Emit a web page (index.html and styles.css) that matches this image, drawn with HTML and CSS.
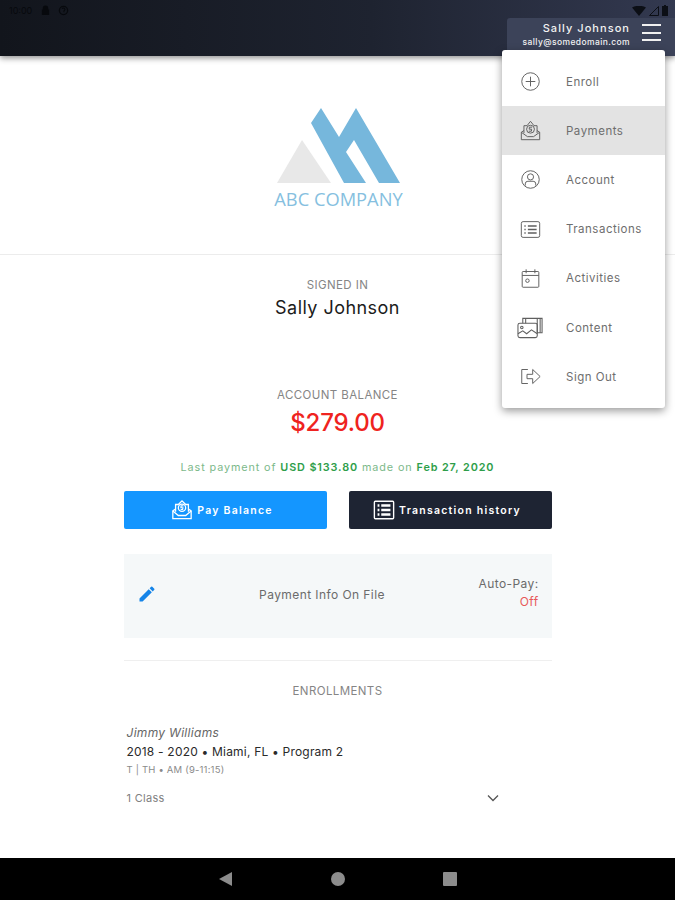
FILE: index.html
```html
<!DOCTYPE html>
<html lang="en">
<head>
<meta charset="utf-8">
<title>Payments</title>
<link rel="stylesheet" href="styles.css">
</head>
<body>
<div class="screen">
  <header class="topbar">
    <div class="status">
      <div class="status-left">
        <span class="clock">10:00</span>
        <svg class="st-icon" viewBox="0 0 12 12"><path d="M3 5V3.500a3 3 0 0 1 6 0V5h1v6H2V5z" fill="#07090d"/></svg>
        <svg class="st-icon" viewBox="0 0 12 12"><circle cx="6" cy="6" r="4.500" fill="none" stroke="#07090d" stroke-width="1.400"/><path d="M4.500 4.200a1.600 1.600 0 1 1 2 2.200V8" fill="none" stroke="#07090d" stroke-width="1.200"/></svg>
      </div>
      <div class="status-right">
        <svg class="st-wifi" viewBox="0 0 14 10"><path d="M0 1.500Q7-2 14 1.500L7 10z" fill="#0c0f16"/></svg>
        <svg class="st-sig" viewBox="0 0 10 10"><path d="M9.500 .5v9h-9z" fill="none" stroke="#0c0f16"/></svg>
        <svg class="st-bat" viewBox="0 0 6 11"><path d="M2 0h2v1h2v10H0V1h2z" fill="#0c0f16"/></svg>
      </div>
    </div>
    <div class="account-chip">
      <div class="account-text">
        <div class="account-name">Sally Johnson</div>
        <div class="account-mail">sally@somedomain.com</div>
      </div>
      <div class="burger"><i></i><i></i><i></i></div>
    </div>
  </header>

  <main class="content">
    <section class="brand">
      <svg class="logo" viewBox="0 0 130 76">
        <path d="M4 75 29 32 58 75z" fill="#e8e8e8"/>
        <path d="M38 15 48 0 66 29 83 0 127 75H106L81 32 73 44 93 75H71z" fill="#76b7dc"/>
      </svg>
      <div class="logo-name">ABC COMPANY</div>
    </section>

    <section class="column">
      <div class="label signed">SIGNED IN</div>
      <div class="user">Sally Johnson</div>
      <div class="label balance-label">ACCOUNT BALANCE</div>
      <div class="balance">$279.00</div>
      <div class="last-pay">Last payment of <b>USD $133.80</b> made on <b>Feb 27, 2020</b></div>

      <div class="actions">
        <button class="btn btn-pay">
          <svg class="btn-icon" viewBox="0 0 24 24" fill="none" stroke="#fff" stroke-width="1.400"><path d="M5 11 2 13v8.500h20V13l-3-2"/><path d="M2 13l6 5h8l6-5"/><path d="M5 14V6h3l4-4 4 4h3v8"/><circle cx="12" cy="9.500" r="4"/><path d="M13.500 7.500h-2.500l-.2 2h2.200l-.3 2h-2.200" stroke-width="1.200"/></svg>
          <span>Pay Balance</span>
        </button>
        <button class="btn btn-history">
          <svg class="btn-icon" viewBox="0 0 24 24" fill="none" stroke="#fff" stroke-width="1.500"><rect x="1.500" y="2.500" width="21" height="19" rx="1"/><path d="M5 7h2M5 12h2M5 17h2M9 7h10M9 12h10M9 17h10" stroke-width="2.800"/></svg>
          <span>Transaction history</span>
        </button>
      </div>

      <div class="pay-info">
        <svg class="pencil" viewBox="0 0 24 24"><path d="M3 17.250V21h3.750L17.810 9.940l-3.750-3.750L3 17.250zM20.710 7.040a1 1 0 0 0 0-1.410l-2.340-2.340a1 1 0 0 0-1.410 0l-1.830 1.830 3.750 3.750 1.830-1.830z" fill="#1584e8"/></svg>
        <div class="pay-info-text">Payment Info On File</div>
        <div class="autopay">Auto-Pay:<br><span class="off">Off</span></div>
      </div>

      <div class="rule"></div>
      <div class="label enroll-label">ENROLLMENTS</div>

      <div class="enrollment">
        <div class="student">Jimmy Williams</div>
        <div class="program">2018 - 2020 • Miami, FL • Program 2</div>
        <div class="schedule">T | TH • AM (9-11:15)</div>
        <div class="classes">
          <span>1 Class</span>
          <svg class="chevron" viewBox="0 0 12 8"><path d="M1 1.500 6 6.500l5-5" fill="none" stroke="#555" stroke-width="1.300"/></svg>
        </div>
      </div>
    </section>
  </main>

  <nav class="navbar">
    <svg class="nav-icon" viewBox="0 0 14 14"><path d="M13 0v14L0 7z" fill="#8c8c8c"/></svg>
    <svg class="nav-icon" viewBox="0 0 14 14"><circle cx="7" cy="7" r="7" fill="#8c8c8c"/></svg>
    <svg class="nav-icon" viewBox="0 0 14 14"><rect width="14" height="14" rx="1" fill="#8c8c8c"/></svg>
  </nav>

  <div class="menu">
    <div class="menu-item">
      <svg class="menu-icon" viewBox="0 0 24 24"><circle cx="12" cy="12" r="10"/><path d="M12 6.500v11M6.500 12h11"/></svg>
      <span>Enroll</span>
    </div>
    <div class="menu-item active">
      <svg class="menu-icon" viewBox="0 0 24 24"><path d="M4.500 12 1.500 14v8.500h21V14l-3-2"/><path d="M1.500 14l7 5h7l7-5"/><path d="M4.500 15V6.500h3.500L12 1.500l4 5h3.500V15"/><circle cx="12" cy="10.500" r="4.500"/><path d="M13.800 8.200h-3l-.3 2.300h2.800l-.3 2.300h-3"/></svg>
      <span>Payments</span>
    </div>
    <div class="menu-item">
      <svg class="menu-icon" viewBox="0 0 24 24"><circle cx="12" cy="12" r="10"/><circle cx="12" cy="9" r="3.500"/><path d="M6 19v-2a3 3 0 0 1 3-3h6a3 3 0 0 1 3 3v2"/></svg>
      <span>Account</span>
    </div>
    <div class="menu-item">
      <svg class="menu-icon" viewBox="0 0 24 24"><rect x="1.500" y="3" width="21" height="18" rx="2"/><path d="M5 8h1.500M5 12h1.500M5 16h1.500M9 8h10M9 12h10M9 16h10" stroke-width="1.600"/></svg>
      <span>Transactions</span>
    </div>
    <div class="menu-item">
      <svg class="menu-icon" viewBox="0 0 24 24"><rect x="2.500" y="4" width="19" height="18" rx="1"/><path d="M2.500 8.500h19M7 1.500V6M17 1.500V6"/><circle cx="8.500" cy="14.500" r="2"/></svg>
      <span>Activities</span>
    </div>
    <div class="menu-item">
      <svg class="menu-icon wide" viewBox="0 0 28 24"><path d="M6 7V2h20v15h-5"/><path d="M21 2v15M24 2v15"/><path d="M9 2v5"/><rect x="1" y="7" width="20" height="15" rx="2"/><circle cx="5" cy="11.500" r="1.300"/><path d="M1 18l5-3 4 3 5-4 6 4"/></svg>
      <span>Content</span>
    </div>
    <div class="menu-item">
      <svg class="menu-icon" viewBox="0 0 24 24"><path d="M9 4H2v16h7"/><path d="M8 9.500h6.500V4L23 12l-8.500 8v-5.500H8z"/></svg>
      <span>Sign Out</span>
    </div>
  </div>
</div>
</body>
</html>
```
FILE: styles.css
```css
* { box-sizing: border-box; }
html, body { margin: 0; padding: 0; }
body { font-family: "Inter", "Open Sans", sans-serif; background: #fff; color: #222; }

.screen { position: relative; width: 675px; height: 900px; display: flex; flex-direction: column; overflow: hidden; }

/* top bar */
.topbar {
  height: 56px; flex: none; display: flex; flex-direction: column; align-items: flex-end;
  background: linear-gradient(90deg, #12151c 0%, #1e2330 55%, #333950 100%);
  box-shadow: 0 2px 6px rgba(0,0,0,.45);
  position: relative;
}
.status { width: 100%; height: 18px; display: flex; justify-content: space-between; align-items: flex-start; padding: 5px 7px 0 9px; }
.status-left { display: flex; align-items: center; gap: 7px; }
.clock { font-size: 9px; color: #07090d; width: 24px; }
.st-icon { width: 11px; height: 11px; }
.status-right { display: flex; align-items: center; gap: 3px; }
.st-wifi { width: 14px; height: 10px; }
.st-sig { width: 10px; height: 10px; }
.st-bat { width: 6px; height: 11px; }

.account-chip {
  width: 168px; height: 38px; display: flex; justify-content: flex-end; padding: 3px 14px 0 0; gap: 12px;
  background: #3c4359; border-radius: 3px 0 0 0;
}
.account-text { text-align: right; color: #f2f2f2; }
.account-name { font-size: 11px; font-weight: 500; letter-spacing: 1.050px; line-height: 14px; }
.account-mail { font-size: 8.500px; font-weight: 500; letter-spacing: .4px; line-height: 13px; margin-top: 1px; }
.burger { width: 19px; height: 17px; display: flex; flex-direction: column; justify-content: space-between; margin-top: 3px; }
.burger i { display: block; height: 2px; background: #f0f0f0; }

/* main */
.content { flex: 1; display: flex; flex-direction: column; align-items: center; }
.brand { width: 100%; height: 199px; flex: none; border-bottom: 1px solid #ececec; display: flex; flex-direction: column; align-items: center; padding-top: 52px; }
.logo { width: 130px; height: 76px; display: block; }
.logo-name { font-family: "Open Sans", sans-serif; font-size: 18.300px; line-height: 24px; color: #86bfe0; margin: 3px 0 0 2px; }

.column { width: 428px; display: flex; flex-direction: column; align-items: center; }
.label { font-size: 11.500px; letter-spacing: .4px; color: #858585; line-height: 14px; }
.signed { margin-top: 23px; }
.user { font-size: 18px; letter-spacing: .45px; line-height: 24px; color: #1b1b1b; margin-top: 4px; }
.balance-label { margin-top: 68px; }
.balance { font-size: 24px; font-weight: 500; letter-spacing: -.2px; color: #ef2320; line-height: 30px; margin-top: 6px; }
.last-pay { font-size: 10.800px; letter-spacing: .9px; color: #7cb98a; line-height: 14px; margin-top: 23px; }
.last-pay b { color: #2e9e4a; font-weight: 600; }

.actions { width: 100%; display: flex; justify-content: space-between; margin-top: 16px; }
.btn { width: 203px; height: 38px; border: 0; border-radius: 2px; display: flex; align-items: center; justify-content: center; gap: 4px; color: #fff; font-family: inherit; font-size: 10.500px; font-weight: 600; letter-spacing: 1.250px; padding: 0 6px 0 0; }
.btn-pay { background: #1496ff; }
.btn-history { background: #1e2433; }
.btn-icon { width: 22px; height: 22px; }

.pay-info { width: 100%; height: 84px; margin-top: 25px; background: #f5f8f9; display: flex; align-items: center; padding: 0 13px 4px; font-size: 12px; letter-spacing: .42px; color: #6b6b6b; }
.pencil { width: 20px; height: 20px; flex: none; }
.pay-info-text { flex: 1; text-align: center; padding-left: 9px; }
.autopay { text-align: right; line-height: 18px; width: 60px; padding-bottom: 2px; white-space: nowrap; }
.off { color: #e8585a; }

.rule { width: 100%; height: 1px; background: #efefef; margin-top: 22px; }
.enroll-label { margin-top: 23px; }

.enrollment { width: 100%; margin-top: 28px; padding-left: 3px; }
.student { font-size: 12px; font-style: italic; color: #666; line-height: 14px; letter-spacing: .3px; }
.program { font-size: 12px; color: #2a2a2a; line-height: 16px; margin-top: 4px; letter-spacing: .2px; }
.schedule { font-size: 9.500px; color: #8a8a8a; line-height: 12px; margin-top: 4px; letter-spacing: .2px; }
.classes { display: flex; justify-content: space-between; align-items: center; width: 372px; font-size: 11px; color: #808080; margin-top: 15px; line-height: 14px; letter-spacing: .3px; }
.chevron { width: 12px; height: 8px; }

/* android nav */
.navbar { height: 42px; flex: none; background: #000; display: flex; justify-content: center; align-items: center; gap: 98px; padding-left: 1px; }
.nav-icon { width: 14px; height: 14px; }

/* dropdown */
.menu { position: absolute; left: 502px; top: 50px; width: 163px; height: 358px; padding-top: 7px; background: #fff; border-radius: 3px; box-shadow: 0 3px 8px rgba(0,0,0,.4); }
.menu-item { height: 49.200px; display: flex; align-items: center; padding-left: 18px; font-size: 11.500px; letter-spacing: .5px; color: #6e6e6e; }
.menu-item.active { background: #e3e3e3; }
.menu-icon { width: 21px; height: 21px; margin-right: 25px; flex: none; fill: none; stroke: #5f5f5f; stroke-width: 1.100; }
.menu-icon.wide { width: 27px; height: 24px; margin-left: -3px; margin-right: 22px; }
```
